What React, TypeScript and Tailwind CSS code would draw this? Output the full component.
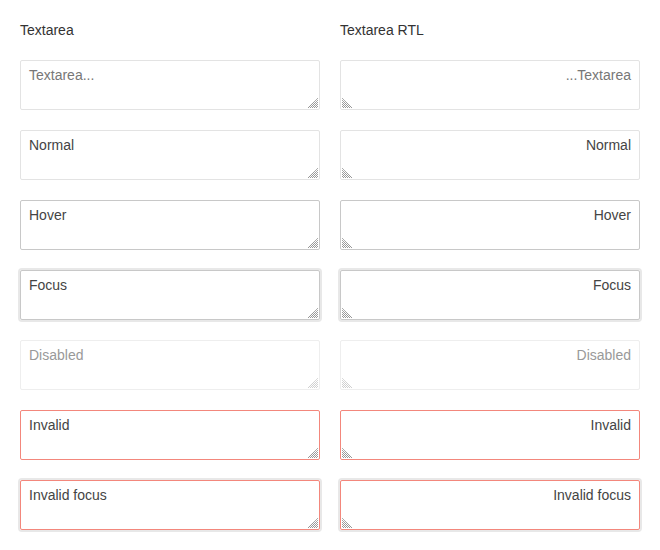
import React from "react";

type Variant = "placeholder" | "normal" | "hover" | "focus" | "disabled" | "invalid" | "invalidFocus";

const ROWS: { variant: Variant; text: string }[] = [
  { variant: "placeholder", text: "" },
  { variant: "normal", text: "Normal" },
  { variant: "hover", text: "Hover" },
  { variant: "focus", text: "Focus" },
  { variant: "disabled", text: "Disabled" },
  { variant: "invalid", text: "Invalid" },
  { variant: "invalidFocus", text: "Invalid focus" },
];

const variantClass: Record<Variant, string> = {
  placeholder: "border-[#e3e3e3]",
  normal: "border-[#e3e3e3]",
  hover: "border-[#c8c8c8]",
  focus: "border-[#c8c8c8] shadow-[0_0_0_2px_#e8e8e8]",
  disabled: "border-[#eeeeee] text-[#999] bg-white",
  invalid: "border-[#f3877c]",
  invalidFocus: "border-[#f3877c] shadow-[0_0_0_2px_#e8e8e8]",
};

// hatched corner grip, drawn over the textarea
function Grip({ rtl, faded }: { rtl?: boolean; faded?: boolean }) {
  const c = faded ? "#bdbdbd" : "#6f6f6f";
  return (
    <svg
      width="10"
      height="10"
      viewBox="0 0 10 10"
      className={"pointer-events-none absolute bottom-[2px] " + (rtl ? "left-[2px] -scale-x-100" : "right-[2px]")}
    >
      {[0, 2, 4, 6, 8].map((o) => (
        <path key={o} d={`M${o} 10 L10 ${o}`} stroke={c} strokeWidth="1" strokeDasharray="1 0.5" fill="none" />
      ))}
    </svg>
  );
}

function Field({ variant, text, rtl }: { variant: Variant; text: string; rtl?: boolean }) {
  return (
    <div className="relative w-[300px]">
      <textarea
        dir={rtl ? "rtl" : "ltr"}
        disabled={variant === "disabled"}
        placeholder={variant === "placeholder" ? "Textarea..." : undefined}
        defaultValue={text}
        className={
          "block h-[50px] w-[300px] resize-none rounded-[2px] border px-[8px] py-[6px] text-[14px] leading-[16px] text-[#444] outline-none placeholder:text-[#777] " +
          variantClass[variant]
        }
      />
      <Grip rtl={rtl} faded={variant === "disabled"} />
    </div>
  );
}

function Column({ title, rtl }: { title: string; rtl?: boolean }) {
  return (
    <div className="flex flex-col">
      <div className="h-[20px] text-[14px] leading-[20px] text-[#333]">{title}</div>
      <div className="mt-[20px] flex flex-col gap-[20px]">
        {ROWS.map((r) => (
          <Field key={r.variant} variant={r.variant} text={r.text} rtl={rtl} />
        ))}
      </div>
    </div>
  );
}

export default function App() {
  return (
    <div className="min-h-[550px] w-[660px] bg-white px-[20px] pt-[20px]" style={{ fontFamily: '"Liberation Sans", Arial, sans-serif' }}>
      <div className="flex gap-[20px]">
        <Column title="Textarea" />
        <Column title="Textarea RTL" rtl />
      </div>
    </div>
  );
}
